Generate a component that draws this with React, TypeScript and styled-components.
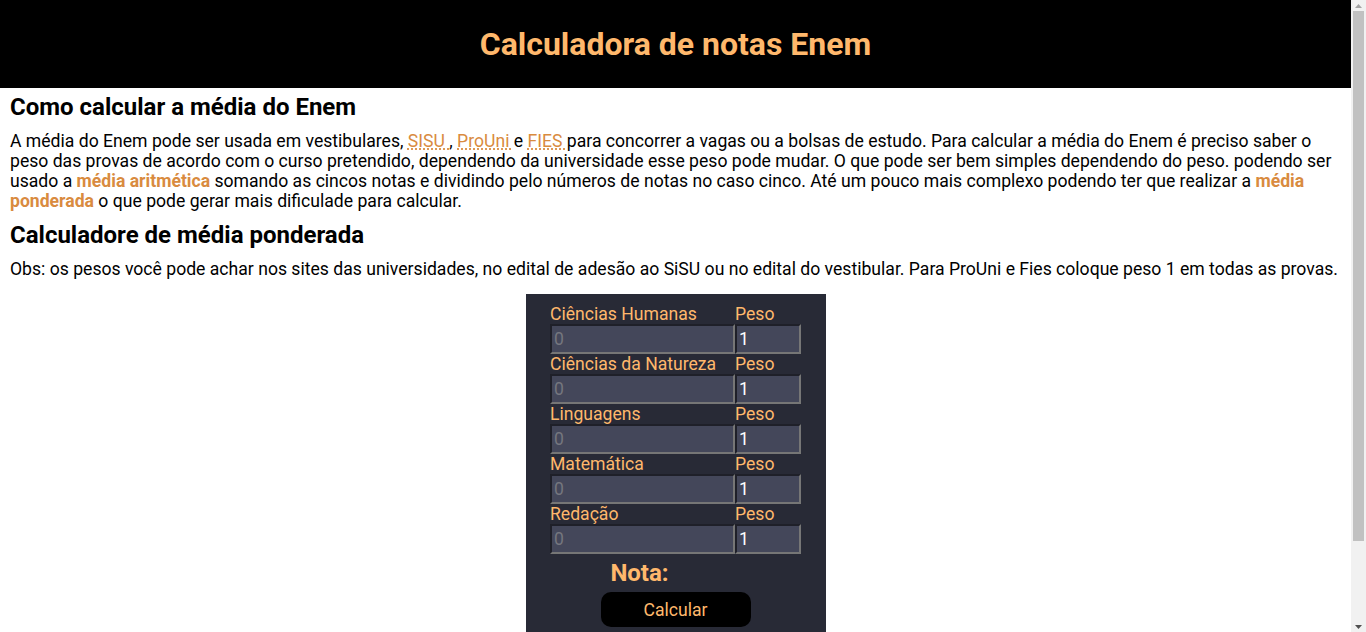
import React from "react";
import styled, { createGlobalStyle } from "styled-components";

const Global = createGlobalStyle`
  html, body { margin: 0; padding: 0; background: #fff; }
  body { font-family: Roboto, "Liberation Sans", sans-serif; color: #000; }
  * { box-sizing: border-box; }
`;

const Page = styled.div`
  padding-right: 15px;
`;

const ScrollBar = styled.div`
  position: fixed;
  top: 0;
  right: 0;
  width: 15px;
  height: 100vh;
  background: #f1f1f1;
  display: flex;
  flex-direction: column;
  align-items: center;
`;

const ArrowBox = styled.div`
  height: 11px;
  width: 15px;
  display: flex;
  align-items: center;
  justify-content: center;
`;

const Track = styled.div`
  flex: 1;
  width: 15px;
  padding: 0 2px;
`;

const Thumb = styled.div`
  height: 530px;
  background: #c1c1c1;
`;

const Header = styled.header`
  background: #000;
  height: 88px;
  display: flex;
  align-items: center;
  justify-content: center;
`;

const Title = styled.h1`
  margin: 0;
  color: #ffb86c;
  font-size: 32px;
  font-weight: 700;
`;

const Main = styled.main`
  padding: 5px 10px 0;
`;

const Heading = styled.h2`
  margin: 0 0 10px;
  font-size: 24px;
  font-weight: 700;
  line-height: 28px;
`;

const Paragraph = styled.p<{ $gap?: number }>`
  margin: 0 0 ${(p) => p.$gap ?? 10}px;
  font-size: 17.6px;
  line-height: 20px;
`;

const Abbr = styled.abbr`
  color: #d98b3f;
  text-decoration: underline dotted;
  text-underline-offset: 2px;
`;

const Strong = styled.strong`
  color: #d98b3f;
`;

const Calculator = styled.form`
  width: 300px;
  margin: 0 auto;
  background: #282a36;
  padding: 10px 24px 20px;
  display: flex;
  flex-direction: column;
  align-items: center;
`;

const Grid = styled.div`
  display: grid;
  grid-template-columns: 185px 66px;
  grid-auto-rows: 20px 30px;
`;

const FieldLabel = styled.label`
  color: #ffb86c;
  font-size: 17.6px;
  line-height: 20px;
  white-space: nowrap;
`;

const Input = styled.input`
  width: 100%;
  height: 30px;
  background: #44475a;
  color: #fff;
  font-family: Roboto, "Liberation Sans", sans-serif;
  font-size: 17.6px;
  padding: 0 2px;
  border-width: 2px;
  border-style: solid;
  border-top-color: #1f2029;
  border-left-color: #1f2029;
  border-right-color: #767676;
  border-bottom-color: #767676;
  outline: none;
  &::placeholder { color: #75767e; }
`;

const ResultRow = styled.div`
  display: flex;
  justify-content: center;
  margin-top: 5px;
  height: 28px;
  align-items: center;
`;

const ResultLabel = styled.span`
  color: #ffb86c;
  font-size: 24px;
  font-weight: 700;
`;

const ResultValue = styled.span`
  min-width: 72px;
`;

const Button = styled.button`
  margin-top: 5px;
  width: 150px;
  height: 35px;
  background: #000;
  color: #ffb86c;
  border: none;
  border-radius: 10px;
  font-family: Roboto, "Liberation Sans", sans-serif;
  font-size: 17.6px;
  cursor: pointer;
`;

const subjects = ["Ciências Humanas", "Ciências da Natureza", "Linguagens", "Matemática", "Redação"];

export default function App() {
  return (
    <>
      <Global />
      <Page>
        <Header>
          <Title>Calculadora de notas Enem</Title>
        </Header>
        <Main>
          <Heading>Como calcular a média do Enem</Heading>
          <Paragraph>
            A média do Enem pode ser usada em vestibulares, <Abbr title="Sistema de Seleção Unificada">SISU </Abbr>,{" "}
            <Abbr title="Programa Universidade para Todos">ProUni </Abbr>e{" "}
            <Abbr title="Fundo de Financiamento Estudantil">FIES </Abbr>para concorrer a vagas ou a bolsas de estudo.
            Para calcular a média do Enem é preciso saber o peso das provas de acordo com o curso pretendido,
            dependendo da universidade esse peso pode mudar. O que pode ser bem simples dependendo do peso. podendo ser
            usado a <Strong>média aritmética</Strong> somando as cincos notas e dividindo pelo números de notas no caso
            cinco. Até um pouco mais complexo podendo ter que realizar a <Strong>média ponderada</Strong> o que pode
            gerar mais dificulade para calcular.
          </Paragraph>
          <Heading>Calculadore de média ponderada</Heading>
          <Paragraph $gap={15}>
            Obs: os pesos você pode achar nos sites das universidades, no edital de adesão ao SiSU ou no edital do
            vestibular. Para ProUni e Fies coloque peso 1 em todas as provas.
          </Paragraph>
          <Calculator onSubmit={(e) => e.preventDefault()}>
            <Grid>
              {subjects.map((s) => (
                <React.Fragment key={s}>
                  <FieldLabel>{s}</FieldLabel>
                  <FieldLabel>Peso</FieldLabel>
                  <Input type="text" placeholder="0" />
                  <Input type="text" defaultValue="1" />
                </React.Fragment>
              ))}
            </Grid>
            <ResultRow>
              <ResultLabel>Nota:</ResultLabel>
              <ResultValue />
            </ResultRow>
            <Button type="submit">Calcular</Button>
          </Calculator>
        </Main>
      </Page>
      <ScrollBar aria-hidden>
        <ArrowBox>
          <svg width="7" height="4" viewBox="0 0 7 4">
            <polygon points="0,4 3.5,0 7,4" fill="#a3a3a3" />
          </svg>
        </ArrowBox>
        <Track>
          <Thumb />
        </Track>
        <ArrowBox>
          <svg width="7" height="4" viewBox="0 0 7 4">
            <polygon points="0,0 7,0 3.5,4" fill="#505050" />
          </svg>
        </ArrowBox>
      </ScrollBar>
    </>
  );
}
